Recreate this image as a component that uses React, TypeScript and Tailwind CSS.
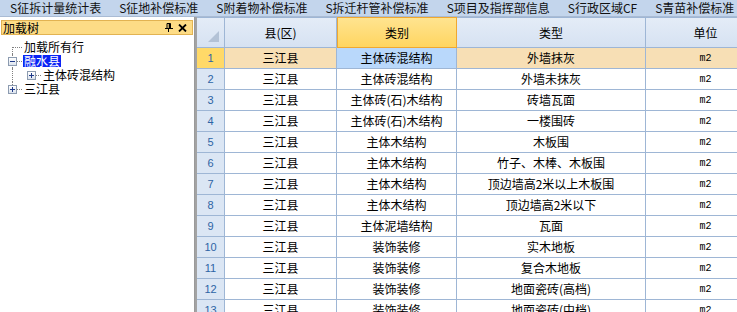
import React from 'react';

const tabs = [
  'S征拆计量统计表',
  'S征地补偿标准',
  'S附着物补偿标准',
  'S拆迁杆管补偿标准',
  'S项目及指挥部信息',
  'S行政区域CF',
  'S青苗补偿标准',
];

const rows = [
  ['三江县', '主体砖混结构', '外墙抹灰'],
  ['三江县', '主体砖混结构', '外墙未抹灰'],
  ['三江县', '主体砖(石)木结构', '砖墙瓦面'],
  ['三江县', '主体砖(石)木结构', '一楼围砖'],
  ['三江县', '主体木结构', '木板围'],
  ['三江县', '主体木结构', '竹子、木棒、木板围'],
  ['三江县', '主体木结构', '顶边墙高2米以上木板围'],
  ['三江县', '主体木结构', '顶边墙高2米以下'],
  ['三江县', '主体泥墙结构', '瓦面'],
  ['三江县', '装饰装修', '实木地板'],
  ['三江县', '装饰装修', '复合木地板'],
  ['三江县', '装饰装修', '地面瓷砖(高档)'],
  ['三江县', '装饰装修', '地面瓷砖(中档)'],
];

const cjk = { fontFamily: '"Noto Sans CJK SC", "Noto Sans", sans-serif' };

function ExpandBox({ open }: { open?: boolean }) {
  return (
    <span className="relative z-10 flex h-[9px] w-[9px] items-center justify-center border border-[#8c9bb0] bg-gradient-to-b from-white to-[#dde4ee]">
      <svg width="7" height="7" viewBox="0 0 7 7">
        <path d="M1 3.5h5" stroke="#1f3a8a" strokeWidth="1" />
        {!open && <path d="M3.5 1v5" stroke="#1f3a8a" strokeWidth="1" />}
      </svg>
    </span>
  );
}

function TreePanel() {
  return (
    <div className="flex w-[195px] shrink-0 flex-col border-r border-[#9a9a9a] bg-white pt-[3px]" style={cjk}>
      <div className="mx-[1px] flex h-[15px] items-center justify-between border border-[#e2b352] bg-[#fddc86] pl-[1px] pr-[5px] text-[12px] leading-none text-black">
        <span>加载树</span>
        <div className="flex items-center gap-[5px]">
          <svg width="8" height="9" viewBox="0 0 8 9">
            <path d="M2 0.5h3.5v5H2z" fill="none" stroke="#000" />
            <path d="M4.5 0.5v5" stroke="#000" strokeWidth="1.5" />
            <path d="M0 5.5h8" stroke="#000" />
            <path d="M3.5 5.5v3.5" stroke="#000" />
          </svg>
          <svg width="9" height="8" viewBox="0 0 9 8">
            <path d="M1 0.5l7 7M8 0.5l-7 7" stroke="#000" strokeWidth="1.8" />
          </svg>
        </div>
      </div>
      <div className="pt-[5px] text-[12px] leading-none text-black">
        <div className="flex h-[14px] items-center">
          <div className="relative h-full w-[24px] shrink-0">
            <span className="absolute left-[12px] top-[7px] h-[7px] border-l border-dotted border-[#808080]" />
            <span className="absolute left-[12px] top-[7px] w-[10px] border-t border-dotted border-[#808080]" />
          </div>
          <span>加载所有行</span>
        </div>
        <div className="flex h-[14px] items-center">
          <div className="relative flex h-full w-[23px] shrink-0 items-center">
            <span className="absolute left-[12px] top-0 h-[14px] border-l border-dotted border-[#808080]" />
            <span className="absolute left-[12px] top-[7px] w-[10px] border-t border-dotted border-[#808080]" />
            <span className="ml-[8px]">
              <ExpandBox open />
            </span>
          </div>
          <span className="flex h-[12px] items-center bg-[#0a24f5] px-[1px] text-white">融水县</span>
        </div>
        <div className="flex h-[14px] items-center">
          <div className="relative flex h-full w-[43px] shrink-0 items-center">
            <span className="absolute left-[12px] top-0 h-[14px] border-l border-dotted border-[#808080]" />
            <span className="absolute left-[31px] top-[7px] w-[10px] border-t border-dotted border-[#808080]" />
            <span className="ml-[27px]">
              <ExpandBox />
            </span>
          </div>
          <span>主体砖混结构</span>
        </div>
        <div className="flex h-[14px] items-center">
          <div className="relative flex h-full w-[24px] shrink-0 items-center">
            <span className="absolute left-[12px] top-0 h-[7px] border-l border-dotted border-[#808080]" />
            <span className="absolute left-[12px] top-[7px] w-[10px] border-t border-dotted border-[#808080]" />
            <span className="ml-[8px]">
              <ExpandBox />
            </span>
          </div>
          <span>三江县</span>
        </div>
      </div>
    </div>
  );
}

function Grid() {
  const cols = 'grid grid-cols-[28px_112px_120px_189px_120px]';
  const head = 'flex h-[31px] items-center justify-center border-r border-y border-[#9eb6d5] bg-gradient-to-b from-[#e4ecf7] to-[#d6e2f2] text-[12px] text-black';
  return (
    <div className="flex-1 overflow-hidden bg-white" style={cjk}>
      <div className={cols}>
        <div className="relative h-[31px] border-r border-y border-[#9eb6d5] bg-gradient-to-b from-[#e4ecf7] to-[#d6e2f2]">
          <svg className="absolute bottom-[5px] right-[5px]" width="11" height="11" viewBox="0 0 11 11">
            <path d="M11 0v11H0z" fill="#b3c2d6" />
          </svg>
        </div>
        <div className={head}>县(区)</div>
        <div className="flex h-[31px] items-center justify-center border border-[#f0a830] bg-gradient-to-b from-[#ffe48f] to-[#ffd55f] text-[12px] text-black">
          类别
        </div>
        <div className={head}>类型</div>
        <div className={head}>单位</div>
        {rows.map((r, i) => {
          const sel = i === 0;
          const cell = `flex h-[21px] items-center justify-center border-r border-b border-[#9eb6d5] text-[12px] text-black whitespace-nowrap ${sel ? 'bg-[#f7dfb5]' : 'bg-white'}`;
          return (
            <React.Fragment key={i}>
              <div
                className={`flex h-[21px] items-center justify-center border-r border-b border-[#9eb6d5] text-[11px] text-[#2d64a5] ${sel ? 'bg-[#ffd968]' : 'bg-[#dbe6f4]'}`}
                style={{ fontFamily: '"Liberation Sans", sans-serif' }}
              >
                {i + 1}
              </div>
              <div className={cell}>{r[0]}</div>
              <div className={`${cell} ${sel ? '!bg-[#b9d8fb]' : ''}`}>{r[1]}</div>
              <div className={cell}>{r[2]}</div>
              <div className={cell}>
                <span className="text-[10px]" style={{ fontFamily: '"Liberation Mono", monospace' }}>m2</span>
              </div>
            </React.Fragment>
          );
        })}
      </div>
    </div>
  );
}

export default function App() {
  return (
    <div className="flex h-[312px] w-[737px] flex-col overflow-hidden bg-white">
      <div className="flex h-[17px] shrink-0 items-center border-b border-[#a9bbd4] bg-[#c3d5ec] pl-[1px] text-[12px] leading-none text-[#111]" style={cjk}>
        {tabs.map((t) => (
          <span key={t} className="whitespace-nowrap px-[9px]">
            {t}
          </span>
        ))}
      </div>
      <div className="flex min-h-0 flex-1">
        <TreePanel />
        <div className="w-[2px] shrink-0 bg-[#a3a3a3]" />
        <Grid />
      </div>
    </div>
  );
}
